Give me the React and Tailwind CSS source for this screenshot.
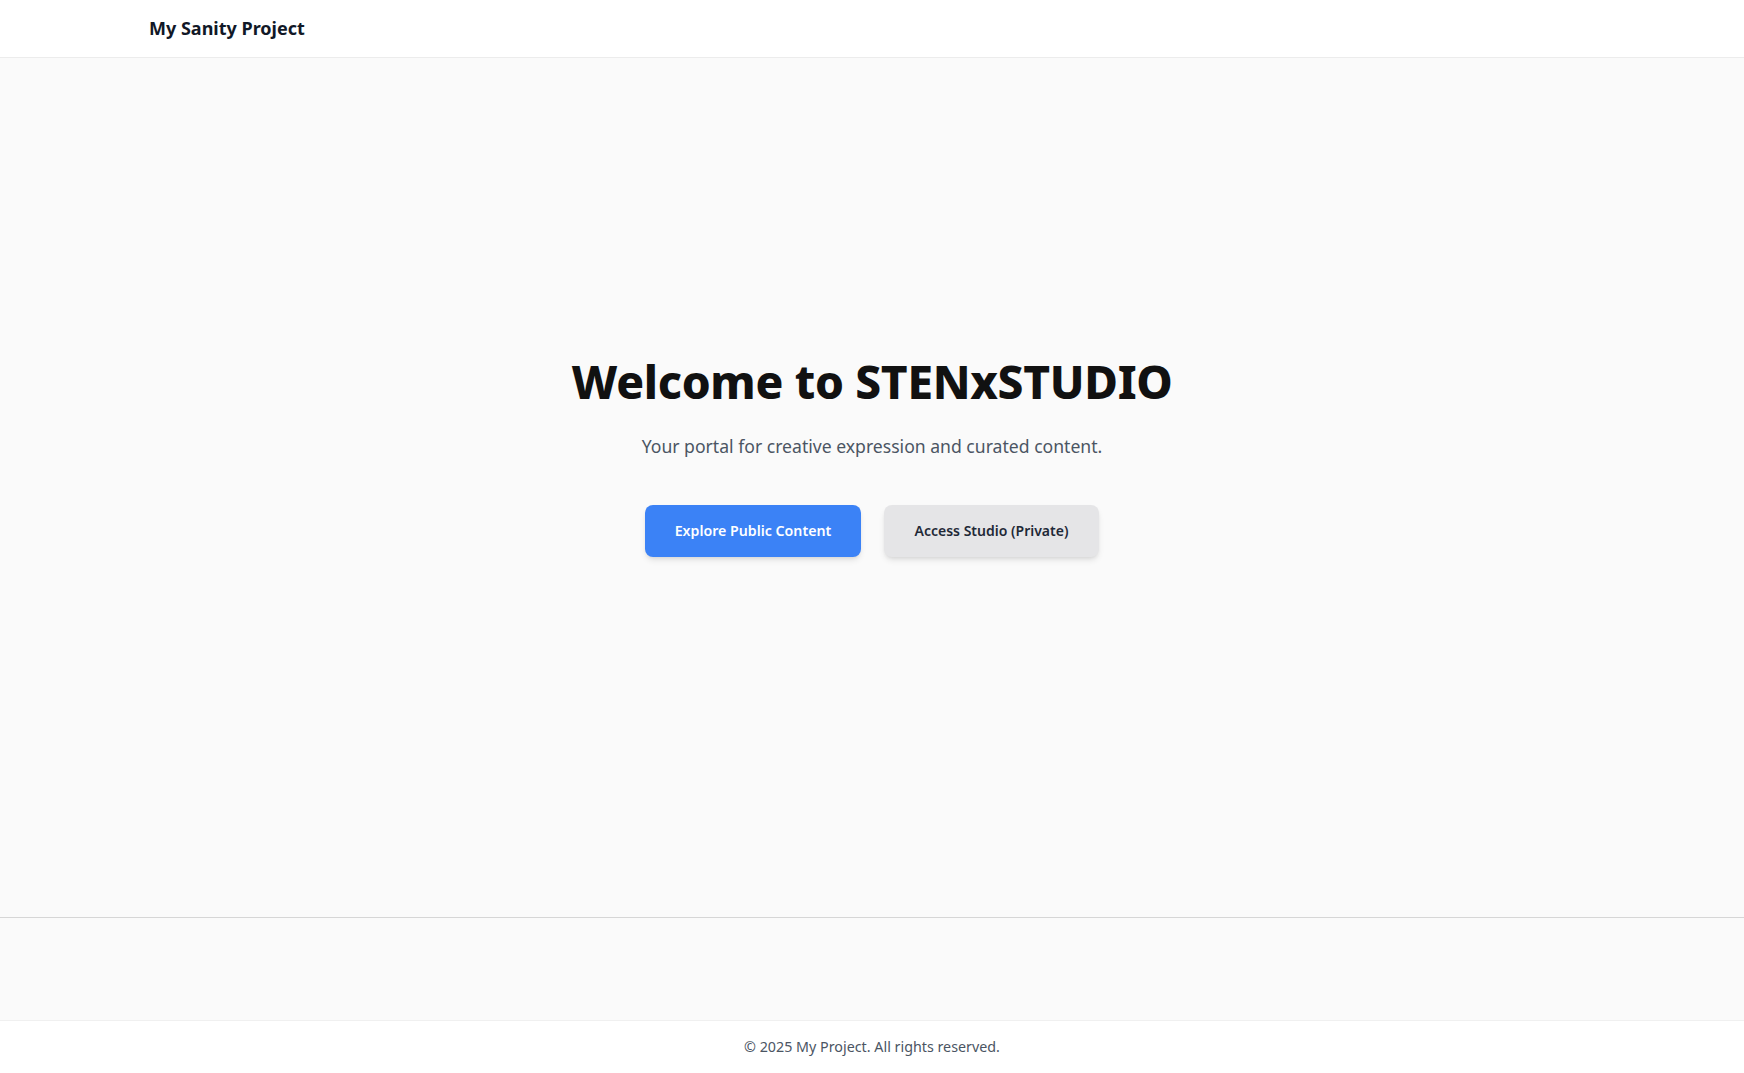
export default function App() {
  return (
    <div className="min-h-screen flex flex-col bg-[#fafafa]" style={{ fontFamily: '"Noto Sans", "Open Sans", sans-serif' }}>
      <header className="h-[58px] bg-white border-b border-[#ececec] flex items-center pl-[149px] shrink-0">
        <span className="text-[18px] font-bold text-[#111827]">My Sanity Project</span>
      </header>
      <main className="h-[860px] shrink-0 border-b border-[#d6d6d6] flex flex-col items-center justify-center pb-[62px]">
        <h1 className="text-[46px] leading-[48px] font-extrabold text-[#111111] tracking-[-0.3px] mb-[27px]">Welcome to STENxSTUDIO</h1>
        <p className="text-[17.6px] leading-[28px] text-[#4b5563] mb-[45px]">Your portal for creative expression and curated content.</p>
        <div className="flex gap-[23px]">
          <button className="w-[216px] h-[52px] rounded-lg bg-[#3b82f6] text-white text-[14.2px] font-semibold shadow-md">Explore Public Content</button>
          <button className="w-[215px] h-[52px] rounded-lg bg-[#e5e5e7] text-[#1f2937] text-[14px] font-semibold shadow-md">Access Studio (Private)</button>
        </div>
      </main>
      <div className="flex-1" />
      <footer className="h-[53px] shrink-0 bg-white border-t border-[#f0f0f0] flex items-center justify-center">
        <span className="text-[14.3px] text-[#4b5563]">© 2025 My Project. All rights reserved.</span>
      </footer>
    </div>
  );
}
